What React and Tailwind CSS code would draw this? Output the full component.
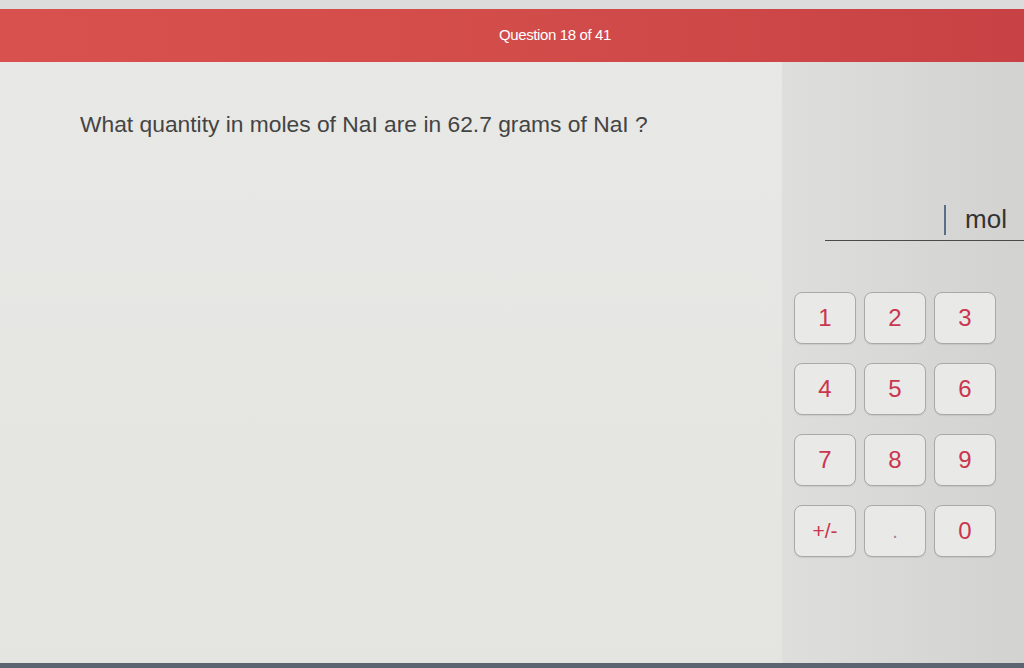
import React from 'react';

const keys = ['1', '2', '3', '4', '5', '6', '7', '8', '9', '+/-', '.', '0'];

const Keypad = () => (
  <div className="grid grid-cols-[62px_62px_62px] gap-x-[8px] gap-y-[19px] ml-[12px]">
    {keys.map((k) => (
      <button
        key={k}
        className="h-[52px] rounded-lg border border-[#a9a9a9] bg-[#e9e9e8] text-[#c9364d] text-[24px] flex items-center justify-center shadow-[0_1px_1px_rgba(0,0,0,0.08)]"
      >
        {k === '.' ? <span className="text-[20px] text-[#9b8a8d]">.</span> : k === '+/-' ? <span className="text-[21px]">+/-</span> : k}
      </button>
    ))}
  </div>
);

const App = () => {
  return (
    <div
      className="w-[1024px] h-[668px] flex flex-col bg-[#e6e6e4] overflow-hidden"
      style={{ fontFamily: '"Liberation Sans", Arial, sans-serif' }}
    >
      <div className="h-[9px] bg-[#dcdcdc]" />
      <div className="h-[53px] bg-gradient-to-r from-[#d9514f] via-[#d24c4a] to-[#c84245] flex items-center justify-center">
        <span className="text-white text-[15px] tracking-tight ml-[86px]">Question 18 of 41</span>
      </div>
      <div className="flex flex-1">
        <div className="flex-1 bg-gradient-to-b from-[#e8e8e6] to-[#e4e4e0] pt-[45px] pl-[80px]">
          <p className="text-[#444] text-[22.8px]">What quantity in moles of NaI are in 62.7 grams of NaI ?</p>
        </div>
        <div className="w-[242px] bg-gradient-to-r from-[#dededd] to-[#d2d2d1] flex flex-col pt-[142px]">
          <div className="ml-[43px] border-b border-[#4a4a4a] h-[37px] flex items-end justify-end pb-[5px]">
            <div className="w-[2px] h-[30px] bg-[#5a6e8c] mr-[19px]" />
            <span className="text-[#333] text-[26px] leading-none pr-[17px] mb-[3px]">mol</span>
          </div>
          <div className="pt-[51px]">
            <Keypad />
          </div>
        </div>
      </div>
      <div className="h-[5px] bg-[#5b6470]" />
    </div>
  );
};

export default App;
